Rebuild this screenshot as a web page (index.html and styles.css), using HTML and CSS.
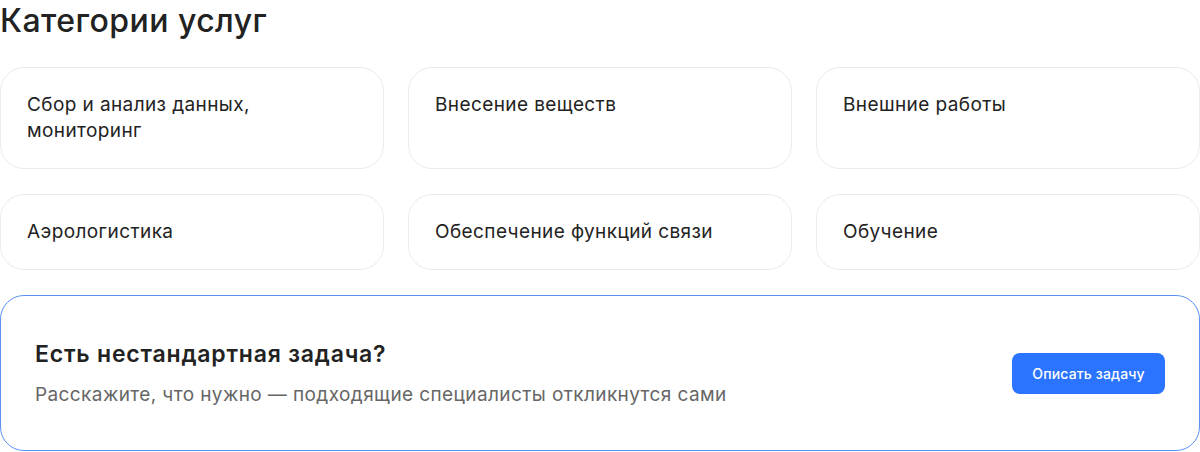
FILE: index.html
```html
<!DOCTYPE html>
<html lang="ru">
<head>
<meta charset="utf-8">
<title>Категории услуг</title>
<link rel="stylesheet" href="styles.css">
</head>
<body>
<section class="categories">
  <h2 class="title">Категории услуг</h2>
  <div class="grid">
    <a class="card">Сбор и анализ данных,<br>мониторинг</a>
    <a class="card">Внесение веществ</a>
    <a class="card">Внешние работы</a>
    <a class="card">Аэрологистика</a>
    <a class="card">Обеспечение функций связи</a>
    <a class="card">Обучение</a>
  </div>
  <div class="banner">
    <div class="banner-text">
      <h3 class="banner-title">Есть нестандартная задача?</h3>
      <p class="banner-sub">Расскажите, что нужно — подходящие специалисты откликнутся сами</p>
    </div>
    <button class="btn">Описать задачу</button>
  </div>
</section>
</body>
</html>
```

FILE: styles.css
```css
* { box-sizing: border-box; }
html, body { margin: 0; padding: 0; background: #fff; }
body {
  font-family: Inter, "Noto Sans", "DejaVu Sans", sans-serif;
  color: #222;
}
.categories {
  width: 1200px;
  display: flex;
  flex-direction: column;
}
.title {
  margin: 0;
  padding-top: 1px;
  font-size: 32px;
  line-height: 40px;
  font-weight: 500;
  color: #222;
  letter-spacing: 0.45px;
}
.grid {
  margin-top: 26px;
  display: grid;
  grid-template-columns: repeat(3, 1fr);
  column-gap: 24px;
  row-gap: 25px;
}
.card {
  display: block;
  border: 1px solid #ebebeb;
  border-radius: 24px;
  padding: 24px 26px;
  font-size: 19px;
  line-height: 26px;
  letter-spacing: 0.4px;
  color: #222;
  background: #fff;
}
.banner {
  margin-top: 25px;
  border: 1px solid #5b93f5;
  border-radius: 24px;
  height: 156px;
  padding: 0 34px;
  display: flex;
  align-items: center;
  justify-content: space-between;
}
.banner-text { display: flex; flex-direction: column; gap: 14px; padding-top: 2px; }
.banner-title {
  margin: 0;
  font-size: 23px;
  line-height: 28px;
  font-weight: 600;
  letter-spacing: 0.8px;
  color: #222;
}
.banner-sub {
  margin: 0;
  font-size: 19px;
  line-height: 26px;
  letter-spacing: 0.4px;
  color: #666;
}
.btn {
  border: 0;
  background: #2b74ff;
  color: #fff;
  font-family: inherit;
  font-size: 14px;
  font-weight: 500;
  letter-spacing: 0.15px;
  height: 41px;
  width: 153px;
  border-radius: 8px;
  cursor: pointer;
}
```
